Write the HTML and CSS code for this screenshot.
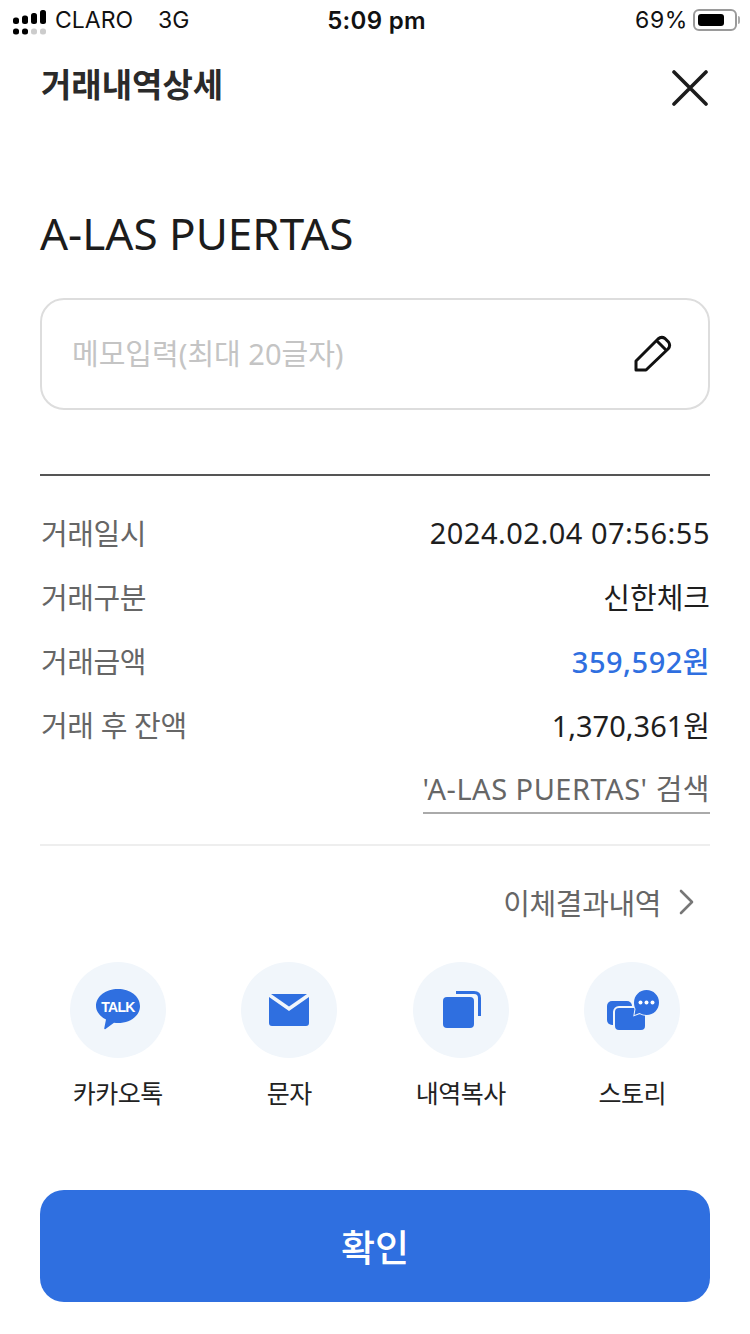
FILE: index.html
```html
<!DOCTYPE html>
<html lang="ko">
<head>
    <meta charset="UTF-8">
    <meta name="viewport" content="width=device-width, initial-scale=1.0">
    <title>거래내역상세</title>
    <link rel="stylesheet" href="styles.css">
</head>
<body>
    <div class="statusbar">
        <div class="status-left">
            <svg class="signal" width="33" height="25" viewBox="0 0 33 25">
                <g fill="#000">
                    <rect x="0" y="7.500" width="6" height="6.500" rx="2.500"/>
                    <rect x="9" y="5.500" width="6" height="8.500" rx="2.500"/>
                    <rect x="18" y="3" width="6" height="11" rx="2.500"/>
                    <rect x="27" y="0" width="6" height="14" rx="2.500"/>
                    <rect x="0" y="18.500" width="6" height="6" rx="2.500"/>
                    <rect x="9" y="18.500" width="6" height="6" rx="2.500"/>
                </g>
                <g fill="#ccc">
                    <rect x="18" y="18.500" width="6" height="6" rx="2.500"/>
                    <rect x="27" y="18.500" width="6" height="6" rx="2.500"/>
                </g>
            </svg>
            <span class="carrier">CLARO</span>
            <span class="network">3G</span>
        </div>
        <div class="status-time">5:09 pm</div>
        <div class="status-right">
            <span class="percent">69%</span>
            <div class="battery"><div class="battery-fill"></div></div>
            <div class="battery-cap"></div>
        </div>
    </div>

    <div class="header">
        <h1>거래내역상세</h1>
        <svg class="close" width="36" height="36" viewBox="0 0 36 36">
            <path d="M2 2 L34 34 M34 2 L2 34" stroke="#1c1c1c" stroke-width="3.6" stroke-linecap="round"/>
        </svg>
    </div>

    <div class="content">
        <h2 class="merchant">A-LAS PUERTAS</h2>

        <div class="memo">
            <span class="memo-text">메모입력(최대 20글자)</span>
            <svg width="38" height="38" viewBox="0 0 38 38">
                <path d="M2 35 L2 26 L24 4 Q27.5 1 31 3.5 L34.5 7 Q37 10.5 34 14 L12 35 Z M23 6 L32 15" fill="none" stroke="#111" stroke-width="3" stroke-linejoin="round"/>
            </svg>
        </div>

        <div class="details">
            <div class="row"><span class="label">거래일시</span><span class="value spaced">2024.02.04 07:56:55</span></div>
            <div class="row"><span class="label">거래구분</span><span class="value">신한체크</span></div>
            <div class="row"><span class="label">거래금액</span><span class="value spaced amount">359,592원</span></div>
            <div class="row"><span class="label">거래 후 잔액</span><span class="value">1,370,361원</span></div>
            <div class="row search-row"><span class="search-link">'A-LAS PUERTAS' 검색</span></div>
        </div>

        <div class="transfer-link">
            <span>이체결과내역</span>
            <svg width="16" height="26" viewBox="0 0 16 26">
                <path d="M2 2 L13 13 L2 24" fill="none" stroke="#777" stroke-width="2.6" stroke-linecap="round" stroke-linejoin="round"/>
            </svg>
        </div>
    </div>

    <div class="share">
        <div class="share-item">
            <div class="share-circle">
                <svg width="44" height="42" viewBox="0 0 44 42">
                    <path d="M22 0 C34 0 44 7 44 17 C44 27 34 34 22 34 C20.5 34 19.5 34 18 33.7 L9.5 40 C8.8 40.5 8 40 8.3 39 L10 30.5 C4 27.5 0 22.5 0 17 C0 7 10 0 22 0 Z" fill="#2f6fe0"/>
                    <text x="22" y="23" text-anchor="middle" class="talk">TALK</text>
                </svg>
            </div>
            <span>카카오톡</span>
        </div>
        <div class="share-item">
            <div class="share-circle">
                <svg width="40" height="32" viewBox="0 0 40 32">
                    <path d="M0 3 L20 17 L40 3 L40 29 Q40 32 37 32 L3 32 Q0 32 0 29 Z" fill="#2f6fe0"/>
                    <path d="M2 0 L38 0 L20 12.5 Z" fill="#2f6fe0"/>
                </svg>
            </div>
            <span>문자</span>
        </div>
        <div class="share-item">
            <div class="share-circle">
                <svg width="40" height="40" viewBox="-2 -1 40 40">
                    <rect x="0" y="6" width="31" height="31" rx="4" fill="#2f6fe0"/>
                    <path d="M13 1.5 L31 1.5 Q36.5 1.5 36.5 7 L36.5 25" fill="none" stroke="#2f6fe0" stroke-width="3"/>
                </svg>
            </div>
            <span>내역복사</span>
        </div>
        <div class="share-item">
            <div class="share-circle">
                <svg width="54" height="40" viewBox="0 0 54 40">
                    <rect x="2" y="11" width="25" height="24" rx="5" fill="#2f6fe0"/>
                    <rect x="9" y="17" width="32" height="24" rx="5" fill="#2f6fe0" stroke="#f1f6fb" stroke-width="2"/>
                    <path d="M41.500 0 C48.500 0 54 5.500 54 12.500 C54 19.500 48.500 25 41.500 25 C39 25 36.500 24.300 34.500 23 L29.500 25 L30.500 19 C29.500 17 29 15 29 12.500 C29 5.500 34.500 0 41.500 0 Z" fill="#2f6fe0" stroke="#f1f6fb" stroke-width="2" paint-order="stroke"/>
                    <circle cx="35.500" cy="12.500" r="2" fill="#fff"/>
                    <circle cx="41.500" cy="12.500" r="2" fill="#fff"/>
                    <circle cx="47.500" cy="12.500" r="2" fill="#fff"/>
                </svg>
            </div>
            <span>스토리</span>
        </div>
    </div>

    <div class="bottom">
        <button class="confirm">확인</button>
    </div>
</body>
</html>
```

FILE: styles.css
```css
* {
    box-sizing: border-box;
}
body {
    margin: 0;
    width: 750px;
    height: 1334px;
    background-color: #fff;
    color: #222;
    font-family: "Noto Sans", "Noto Sans CJK KR", sans-serif;
    overflow: hidden;
}

.statusbar {
    display: grid;
    grid-template-columns: 1fr auto 1fr;
    align-items: center;
    height: 40px;
    padding: 0 10px 0 13px;
    font-family: "Inter", "Liberation Sans", sans-serif;
    font-size: 23px;
    color: #111;
}
.status-left {
    display: flex;
    align-items: center;
}
.signal {
    margin-top: 5px;
}
.carrier {
    margin-left: 9px;
}
.network {
    margin-left: 25px;
}
.status-time {
    font-size: 24px;
    font-weight: 600;
    letter-spacing: 0.3px;
}
.status-right {
    display: flex;
    align-items: center;
    justify-content: flex-end;
}
.percent {
    letter-spacing: 0.6px;
}
.battery {
    width: 44px;
    height: 22px;
    margin-left: 5px;
    padding: 3px;
    border: 2px solid #9a9a9a;
    border-radius: 6px;
}
.battery-fill {
    width: 26px;
    height: 12px;
    background-color: #000;
    border-radius: 3px;
}
.battery-cap {
    width: 2px;
    height: 8px;
    margin-left: 1px;
    background-color: #aaa;
    border-radius: 0 2px 2px 0;
}

.header {
    display: flex;
    align-items: center;
    justify-content: space-between;
    height: 90px;
    padding: 0 41px;
    margin-top: 2px;
    margin-bottom: 10px;
}
.header h1 {
    margin: 0;
    font-size: 33px;
    font-weight: 700;
    color: #2a2a2a;
    transform: translateY(-4px);
}
.close {
    margin-right: 1px;
    margin-top: 2px;
}

.content {
    padding: 0 40px;
}
.merchant {
    margin: 56px 0 0;
    height: 90px;
    font-size: 44px;
    font-weight: 400;
    line-height: 90px;
    color: #1c1c1c;
}
.memo {
    display: flex;
    align-items: center;
    justify-content: space-between;
    height: 112px;
    margin-top: 20px;
    padding: 0 36px 0 30px;
    border: 2px solid #ddd;
    border-radius: 24px;
}
.memo-text {
    padding-bottom: 4px;
    font-size: 29px;
    color: #c4c4c4;
}

.details {
    margin-top: 64px;
    padding: 24px 0 0;
    border-top: 2px solid #555;
    height: 372px;
    border-bottom: 2px solid #eee;
}
.row {
    display: flex;
    align-items: center;
    justify-content: space-between;
    height: 64px;
    font-size: 29px;
}
.label {
    padding-left: 1px;
    color: #666;
    letter-spacing: -0.4px;
}
.value {
    color: #1e1e1e;
}
.spaced {
    letter-spacing: 0.5px;
}
.amount {
    color: #2f6fe0;
    font-weight: 500;
}
.search-row {
    justify-content: flex-end;
}
.search-link {
    padding-top: 4px;
    color: #666;
    line-height: 46px;
    letter-spacing: 0.5px;
    border-bottom: 2px solid #aaa;
}

.transfer-link {
    display: flex;
    align-items: center;
    justify-content: flex-end;
    gap: 18px;
    height: 50px;
    margin-top: 31px;
    padding-right: 15px;
    font-size: 29px;
    color: #666;
    letter-spacing: -0.4px;
}

.share {
    display: grid;
    grid-template-columns: repeat(4, 1fr);
    margin-top: 35px;
    padding: 0 32px;
}
.share-item {
    display: flex;
    flex-direction: column;
    align-items: center;
    font-size: 25px;
    color: #222;
    letter-spacing: -0.5px;
}
.share-circle {
    display: flex;
    align-items: center;
    justify-content: center;
    width: 96px;
    height: 96px;
    margin-bottom: 16px;
    border-radius: 50%;
    background-color: #f1f6fb;
}
.talk {
    font-family: "Liberation Sans", sans-serif;
    font-size: 14px;
    font-weight: 700;
    fill: #fff;
    letter-spacing: -0.7px;
}

.bottom {
    padding: 0 40px;
    margin-top: 80px;
}
.confirm {
    display: block;
    width: 100%;
    height: 112px;
    border: none;
    border-radius: 24px;
    background-color: #2f6fe0;
    color: #fff;
    font-family: inherit;
    font-size: 37px;
    font-weight: 500;
}
```
